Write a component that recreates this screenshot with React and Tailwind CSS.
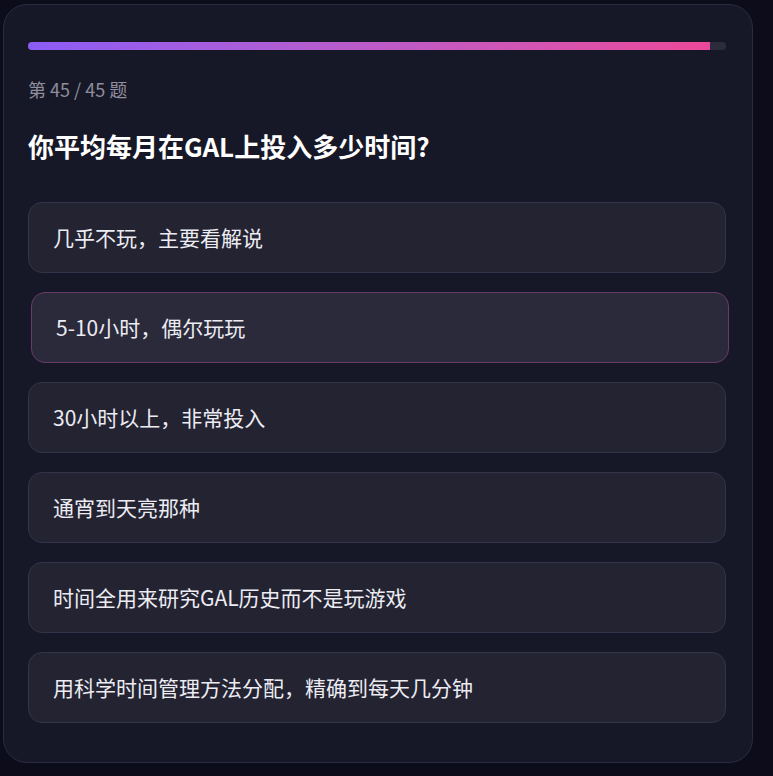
const options = [
  '几乎不玩，主要看解说',
  '5-10小时，偶尔玩玩',
  '30小时以上，非常投入',
  '通宵到天亮那种',
  '时间全用来研究GAL历史而不是玩游戏',
  '用科学时间管理方法分配，精确到每天几分钟',
];

export default function App() {
  const current = 45;
  const total = 45;
  const progress = (44 / total) * 100;
  const hovered = 1;

  return (
    <div
      className="min-h-screen bg-[#0d0c1b] pt-[4px] pl-[3px]"
      style={{ fontFamily: '"Noto Sans CJK SC", "Noto Sans", sans-serif' }}
    >
      <div className="w-[750px] rounded-[24px] border border-[#2b2b40] bg-[#171827] px-[24px] pt-[37px] pb-[39px]">
        {/* progress bar */}
        <div className="h-[8px] w-[698px] overflow-hidden rounded-full bg-[#2c2c3c]">
          <div
            className="h-full bg-gradient-to-r from-[#8b5cf6] to-[#ec4899]"
            style={{ width: `${progress}%` }}
          />
        </div>

        <p className="mt-[27px] text-[18px] leading-[24px] text-[#8e8e9c]">
          第 {current} / {total} 题
        </p>

        <h2 className="mt-[27px] text-[26px] font-bold leading-[36px] text-white">
          你平均每月在GAL上投入多少时间?
        </h2>

        <div className="mt-[38px] flex w-[698px] flex-col gap-[19px]">
          {options.map((opt, i) => (
            <div
              key={i}
              className={
                i === hovered
                  ? 'translate-x-[3px] rounded-[14px] border border-[#6a3a68] bg-[#2a2a3a] px-[24px] py-[19px]'
                  : 'rounded-[14px] border border-[#33334a] bg-[#232332] px-[24px] py-[19px]'
              }
            >
              <span className="text-[21px] leading-[31px] text-[#ececf2]">{opt}</span>
            </div>
          ))}
        </div>
      </div>
    </div>
  );
}
